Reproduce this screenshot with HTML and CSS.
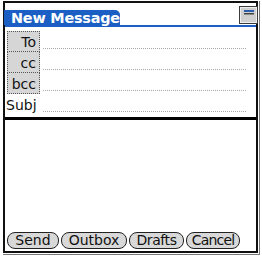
FILE: index.html
```html
<!DOCTYPE html>
<html lang="en">
<head>
<meta charset="UTF-8">
<title>New Message</title>
<link rel="stylesheet" href="styles.css">
</head>
<body>

<div class="marco">
  <div class="tela">
    <div class="topo">
      <span class="aba">New Message</span>
      <svg class="menu" width="19" height="18" viewBox="0 0 19 18">
        <rect x="0.5" y="0.5" width="18" height="17" fill="#cfcfcf" stroke="#3a3a3a"/>
        <rect x="1.5" y="1.5" width="16" height="15" fill="none" stroke="#eeeeee"/>
        <rect x="5" y="4" width="10" height="2" fill="#2a5fb0"/>
        <rect x="5" y="7" width="10" height="1.5" fill="#444"/>
      </svg>
    </div>

    <div class="campos">
      <div class="linha">
        <span class="rotulo caixa">To</span>
        <span class="valor"></span>
      </div>
      <div class="linha">
        <span class="rotulo caixa">cc</span>
        <span class="valor"></span>
      </div>
      <div class="linha">
        <span class="rotulo caixa">bcc</span>
        <span class="valor"></span>
      </div>
      <div class="linha">
        <span class="rotulo">Subj</span>
        <span class="valor"></span>
      </div>
    </div>

    <div class="corpo"></div>

    <div class="botoes">
      <button class="btn b-send">Send</button>
      <button class="btn b-outbox">Outbox</button>
      <button class="btn b-drafts">Drafts</button>
      <button class="btn b-cancel">Cancel</button>
    </div>
  </div>
</div>

</body>
</html>
```

FILE: styles.css
```css
body {
  margin: 0;
  background: #fff;
  font-family: "DejaVu Sans", sans-serif;
  font-size: 14px;
  color: #111;
}

/* moldura dupla do palm */
.marco {
  width: 256px;
  height: 253px;
  margin: 1px 0 0 3px;
  border-right: 1px solid #777;
  border-bottom: 1px solid #777;
}

.tela {
  box-sizing: border-box;
  width: 255px;
  height: 252px;
  border: 2px solid #111;
  display: flex;
  flex-direction: column;
}

.topo {
  display: flex;
  align-items: flex-start;
  height: 22px;
  border-bottom: 2px solid #1b5fc4;
}

.aba {
  margin-top: 7px;
  margin-left: -1px;
  width: 109px;
  height: 15px;
  padding-left: 7px;
  background: #1b5fc4;
  color: #fff;
  font-weight: bold;
  font-size: 14.4px;
  line-height: 16px;
  letter-spacing: -0.2px;
  border-top-right-radius: 5px;
}

.menu {
  margin-left: auto;
  margin-top: 3px;
  margin-right: -2px;
}

.campos {
  margin-top: 4px;
  padding-bottom: 2px;
  border-bottom: 3px solid #000;
}

.linha {
  display: flex;
  height: 21px;
}

.rotulo {
  box-sizing: border-box;
  width: 33px;
  height: 21px;
  margin-left: 2px;
  padding: 2px 3px 0 0;
  line-height: 17px;
  text-align: right;
  border: 1px solid transparent;
}

.caixa {
  background: #d6d6d6;
  border: 1px dotted #555;
}

.linha:nth-child(2) .caixa,
.linha:nth-child(3) .caixa {
  border-top: none;
  padding-top: 3px;
}

.rotulo:not(.caixa) {
  width: 35px;
  margin-left: 0;
  padding-right: 0;
  text-align: left;
}

.valor {
  flex: 1;
  margin: 0 10px 3px 3px;
  border-bottom: 1px dotted #aaa;
}

.corpo {
  flex: 1;
}

.botoes {
  display: flex;
  gap: 2px;
  padding-left: 2px;
  margin-bottom: 2px;
}

.btn {
  box-sizing: border-box;
  height: 17px;
  padding: 0;
  background: #d8d8d8;
  border: 1.5px solid #222;
  border-radius: 8px;
  font-family: "DejaVu Sans", sans-serif;
  font-size: 14px;
  line-height: 13px;
  color: #111;
}

.b-send { width: 52px; }
.b-outbox { width: 66px; }
.b-drafts { width: 55px; letter-spacing: -0.4px; }
.b-cancel { width: 54px; letter-spacing: -0.8px; }
```
